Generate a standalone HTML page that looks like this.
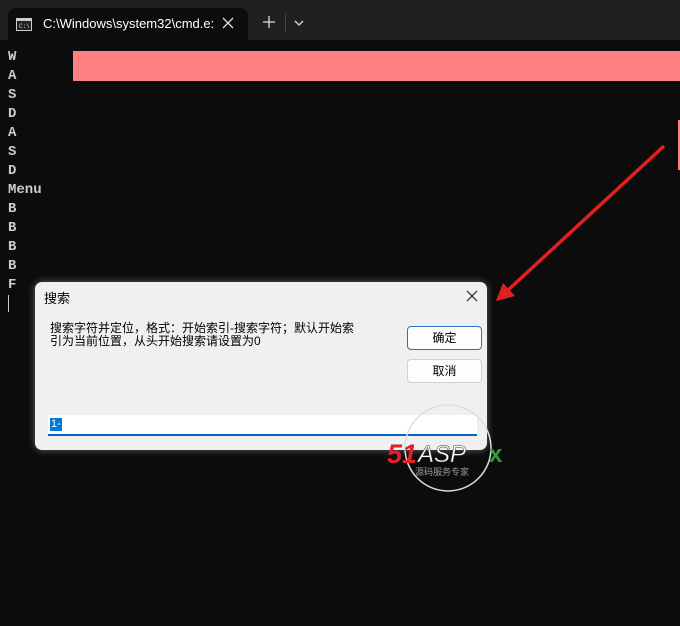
<!DOCTYPE html>
<html><head><style>
body{margin:0;width:680px;height:626px;background:#0c0c0c;position:relative;overflow:hidden;font-family:"Liberation Sans","Noto Sans CJK SC",sans-serif}
.top{position:absolute;left:0;top:0;width:680px;height:40px;background:#202020}
.tab{position:absolute;left:8px;top:8px;width:240px;height:32px;background:#0c0c0c;border-radius:8px 8px 0 0}
.tt{position:absolute;left:43px;top:16px;color:#fff;font-size:13px}
.term{position:absolute;left:8px;top:48px;color:#ccc;font-family:"Liberation Mono",monospace;font-size:14px;font-weight:bold;line-height:19px;white-space:pre}
.dlg{position:absolute;left:35px;top:282px;width:452px;height:168px;background:#f0f0f0;border-radius:7px;box-shadow:0 0 8px rgba(255,255,255,.35)}
.btn{position:absolute;left:372px;width:73px;height:22px;background:#fdfdfd;border:1px solid #d0d0d0;border-radius:4px;font-size:12px;text-align:center;line-height:22px;color:#000}
</style></head><body>
<div class="top"></div><div class="tab"></div>
<svg style="position:absolute;left:16px;top:18px" width="16" height="13"><rect x=".5" y=".5" width="15" height="12" fill="#222" stroke="#ccc"/><rect x="1" y="1" width="14" height="2" fill="#ccc"/><text x="3" y="10" font-size="6" fill="#ccc" font-family="Liberation Mono">C:\</text></svg>
<div class="tt">C:\Windows\system32\cmd.e:</div>
<svg style="position:absolute;left:222px;top:17px" width="12" height="12"><path d="M1 1L11 11M11 1L1 11" stroke="#ddd" stroke-width="1.3"/></svg>
<svg style="position:absolute;left:263px;top:16px" width="12" height="12"><path d="M6 0V12M0 6H12" stroke="#ddd" stroke-width="1.3"/></svg>
<div style="position:absolute;left:285px;top:14px;width:1px;height:18px;background:#444"></div>
<svg style="position:absolute;left:294px;top:20px" width="10" height="6"><path d="M1 1L5 5L9 1" stroke="#ddd" fill="none" stroke-width="1.3"/></svg>
<div style="position:absolute;left:73px;top:51px;width:607px;height:30px;background:#ff8080"></div>
<div style="position:absolute;left:678px;top:120px;width:2px;height:50px;background:#ff8080"></div>
<div class="term">W
A
S
D
A
S
D
Menu
B
B
B
B
F</div>
<div style="position:absolute;left:8px;top:295px;width:1px;height:17px;background:#ccc"></div>
<svg style="position:absolute;left:0;top:0" width="680" height="626"><path d="M664 146L506 292" stroke="#e02020" stroke-width="3.5"/><path d="M496 301L503 283L515 296Z" fill="#e02020"/></svg>
<div class="dlg">
<div style="position:absolute;left:9px;top:6px;font-size:13px;color:#000">搜索</div>
<svg style="position:absolute;left:431px;top:8px" width="12" height="12"><path d="M1 1L11 11M11 1L1 11" stroke="#222" stroke-width="1.2"/></svg>
<div style="position:absolute;left:15px;top:40px;font-size:12px;line-height:13px;color:#000;width:320px">搜索字符并定位，格式：开始索引-搜索字符；默认开始索<br>引为当前位置，从头开始搜索请设置为0</div>
<div class="btn" style="top:44px;border-color:#2f6fbf">确定</div>
<div class="btn" style="top:77px">取消</div>
<div style="position:absolute;left:13px;top:133px;width:429px;height:19px;background:#fff;border-bottom:2px solid #0a63c2"></div>
<div style="position:absolute;left:15px;top:136px;background:#0078d7;color:#fff;font-size:11px;line-height:13px;padding:0 1px">1-</div>
</div>
<svg style="position:absolute;left:385px;top:400px" width="130" height="100"><circle cx="63" cy="48" r="43" fill="none" stroke="#ddd" stroke-width="1.5"/><text x="2" y="63" font-size="27" font-weight="bold" font-style="italic" fill="#e0202a" font-family="Liberation Sans">51</text><text x="33" y="62" font-size="24" font-style="italic" fill="#fff" stroke="#333" stroke-width=".5" font-family="Liberation Sans">ASP</text><text x="104" y="62" font-size="24" font-weight="bold" fill="#2a9d3a" font-family="Liberation Sans">x</text><text x="30" y="75" font-size="9" fill="#999">源码服务专家</text></svg>
</body></html>
